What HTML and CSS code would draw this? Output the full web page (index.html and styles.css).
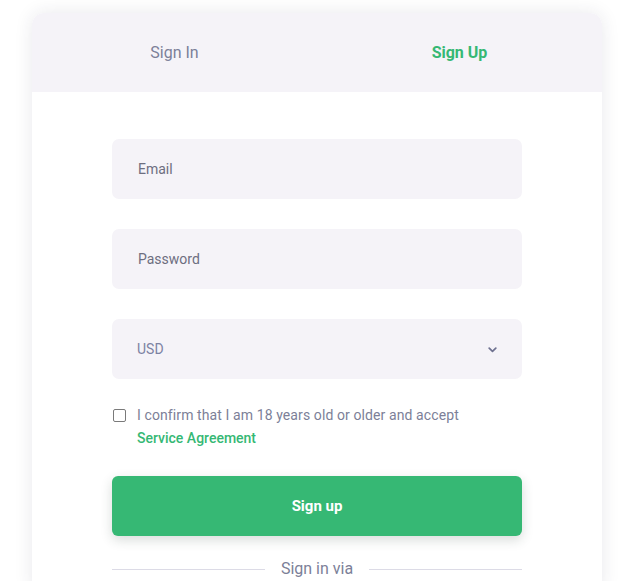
FILE: index.html
```html
<!DOCTYPE html>
<html>
<head>
<meta charset="utf-8">
<link rel="stylesheet" href="styles.css">
</head>
<body>
<div class="card">
  <div class="tabs">
    <div class="tab">Sign In</div>
    <div class="tab active">Sign Up</div>
  </div>
  <form class="form">
    <div class="field"><span class="ph">Email</span></div>
    <div class="field"><span class="ph">Password</span></div>
    <div class="field select"><span class="val">USD</span>
      <svg class="chev" width="9" height="6" viewBox="0 0 9 6"><path d="M1.2 1.2l3.3 3.2 3.3-3.2" fill="none" stroke="#6e7190" stroke-width="1.7" stroke-linecap="round" stroke-linejoin="round"/></svg>
    </div>
    <label class="agree">
      <span class="box"></span>
      <span class="agree-text">I confirm that I am 18 years old or older and accept <a class="link">Service Agreement</a></span>
    </label>
    <div class="btn">Sign up</div>
    <div class="via"><span class="line"></span><span class="via-text">Sign in via</span><span class="line"></span></div>
  </form>
</div>
</body>
</html>
```
FILE: styles.css
```css
* { box-sizing: border-box; }
html, body { margin: 0; padding: 0; background: #fff; }
body { font-family: Roboto, "Liberation Sans", sans-serif; padding: 13px 29px 0 32px; height: 581px; overflow: hidden; }
.card {
  width: 570px;
  background: #fff;
  border-radius: 12px 12px 0 0;
  box-shadow: 0 0 18px rgba(40, 40, 70, 0.10);
  overflow: hidden;
  height: 580px;
}
.tabs { display: flex; height: 79px; background: #f5f3f8; }
.tab {
  flex: 1;
  display: flex;
  align-items: center;
  justify-content: center;
  font-size: 16px;
  color: #7c7f98;
}
.tab.active { color: #35b874; font-weight: 700; }
.form { padding: 47px 80px 0; display: flex; flex-direction: column; }
.field {
  height: 60px;
  background: #f5f3f8;
  border-radius: 7px;
  display: flex;
  align-items: center;
  padding: 0 25px 0 26px;
  margin-bottom: 30px;
  font-size: 14px;
}
.ph { color: #6d6e80; }
.select { justify-content: space-between; padding-left: 25px; }
.select .val { color: #7d82a3; margin-top: -1px; }
.chev { margin-top: 2px; }
.agree { display: flex; align-items: flex-start; margin-top: -5px; font-size: 14px; line-height: 23px; color: #7c7f98; letter-spacing: 0.1px; }
.box {
  width: 13px; height: 13px;
  border: 1.5px solid #7a7a7a;
  border-radius: 2px;
  margin: 5px 11px 0 1px;
  flex: none;
}
.link { display: block; color: #35b874; font-weight: 500; letter-spacing: 0; }
.btn {
  margin-top: 26px;
  height: 60px;
  background: #36b874;
  border-radius: 6px;
  display: flex; align-items: center; justify-content: center;
  color: #fff; font-weight: 700; font-size: 15px;
  box-shadow: 0 4px 12px rgba(40, 60, 50, 0.18);
}
.via { display: flex; align-items: center; margin-top: 23px; font-size: 16px; color: #7c7f98; }
.line { flex: 1; height: 1px; background: #dcdbe6; margin-top: 2px; }
.via-text { padding: 0 16px; }
```
